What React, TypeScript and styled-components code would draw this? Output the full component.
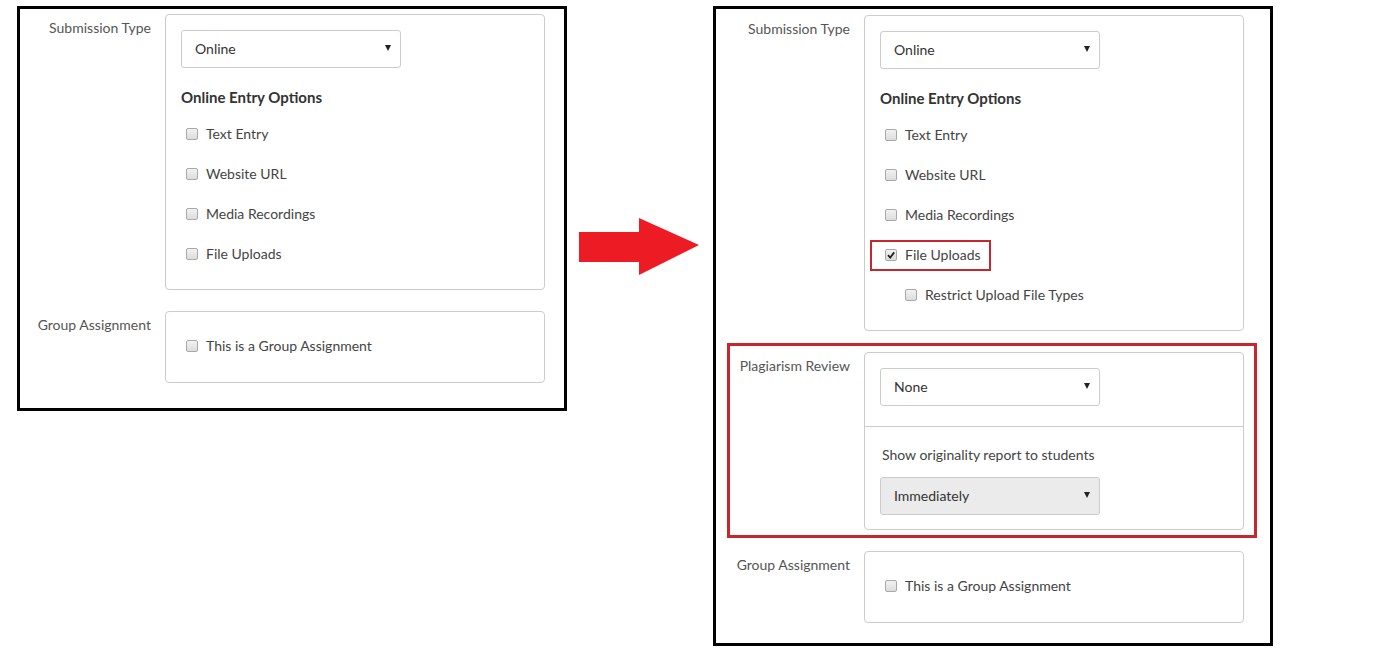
import React from "react";
import styled, { createGlobalStyle } from "styled-components";

const GlobalStyle = createGlobalStyle`
  html, body {
    margin: 0;
    padding: 0;
    background: #fff;
  }
  body {
    font-family: Lato, "Open Sans", "Liberation Sans", sans-serif;
    color: #333;
  }
`;

const Page = styled.div`
  display: flex;
  align-items: flex-start;
  padding: 6px 0 0 17px;
`;

const Frame = styled.div<{ $width: number; $pad: string; $offset?: number }>`
  box-sizing: border-box;
  width: ${(p) => p.$width}px;
  margin-left: ${(p) => p.$offset ?? 0}px;
  border: 3px solid #000;
  padding: ${(p) => p.$pad};
  display: flex;
  flex-direction: column;
  gap: 21px;
`;

const ArrowWrap = styled.svg`
  flex: none;
  margin: 212px 0 0 12px;
`;

const Row = styled.div`
  display: flex;
  align-items: flex-start;
`;

const Highlight = styled.div`
  border: 3px solid #c8262e;
  margin: -9px -13px -8px -3px;
  padding: 6px 10px 5px 0;
`;

const Label = styled.div`
  flex: none;
  box-sizing: border-box;
  width: 134px;
  padding: 4px 14px 0 0;
  text-align: right;
  font-size: 14px;
  line-height: 20px;
  color: #555;
`;

const Panel = styled.div`
  flex: none;
  box-sizing: border-box;
  width: 380px;
  border: 1px solid #ccc;
  border-radius: 4px;
  background: #fff;
`;

const Section = styled.div<{ $pad?: string }>`
  padding: ${(p) => p.$pad ?? "15px"};

  & + & {
    border-top: 1px solid #ccc;
  }
`;

const Select = styled.div<{ $disabled?: boolean }>`
  box-sizing: border-box;
  width: 220px;
  height: 38px;
  display: flex;
  align-items: center;
  justify-content: space-between;
  padding: 0 9px 2px 13px;
  border: 1px solid #ccc;
  border-radius: 3px;
  background: ${(p) => (p.$disabled ? "#ebebeb" : "#fff")};
  font-size: 14px;
  color: #333;
`;

const Caret = styled.span`
  width: 0;
  height: 0;
  border-left: 3px solid transparent;
  border-right: 3px solid transparent;
  border-top: 6px solid #222;
`;

const Heading = styled.div`
  margin: 19px 0 7px;
  font-size: 15px;
  font-weight: 700;
  line-height: 20px;
  color: #333;
`;

const Caption = styled.div`
  font-size: 14px;
  line-height: 20px;
  color: #444;
  margin: -1px 0 12px 2px;
`;

const CheckRow = styled.div<{ $indent?: number }>`
  height: 40px;
  display: flex;
  align-items: center;
  gap: 8px;
  padding-left: ${(p) => p.$indent ?? 5}px;
  font-size: 14px;
  color: #444;
`;

const Text = styled.span`
  margin-top: -2px;
`;

const Mark = styled.span`
  box-sizing: border-box;
  height: 31px;
  display: inline-flex;
  align-items: center;
  gap: 8px;
  margin-left: -15px;
  padding: 0 8px 0 13px;
  border: 2px solid #c8262e;
`;

const Box = styled.span`
  flex: none;
  box-sizing: border-box;
  width: 12px;
  height: 12px;
  display: inline-flex;
  align-items: center;
  justify-content: center;
  border: 1px solid #a9a9a9;
  border-radius: 2px;
  background: linear-gradient(#f2f2f2, #dcdcdc);
`;

const Checkbox = ({ checked }: { checked?: boolean }) => (
  <Box>
    {checked && (
      <svg width="10" height="10" viewBox="0 0 10 10">
        <path d="M2 5.2 L4.2 7.6 L8.2 2.4" fill="none" stroke="#222" strokeWidth="1.8" />
      </svg>
    )}
  </Box>
);

const Arrow = () => (
  <ArrowWrap width="120" height="57" viewBox="0 0 120 57">
    <polygon points="0,14 60,14 60,0 120,27 60,57 60,44 0,44" fill="#ed1c24" />
  </ArrowWrap>
);

const Option = ({ label, checked, indent }: { label: string; checked?: boolean; indent?: number }) => (
  <CheckRow $indent={indent}>
    <Checkbox checked={checked} />
    <Text>{label}</Text>
  </CheckRow>
);

const SubmissionType = ({ expanded }: { expanded?: boolean }) => (
  <Row>
    <Label>Submission Type</Label>
    <Panel>
      <Section>
        <Select>
          Online
          <Caret />
        </Select>
        <Heading>Online Entry Options</Heading>
        <Option label="Text Entry" />
        <Option label="Website URL" />
        <Option label="Media Recordings" />
        {expanded ? (
          <>
            <CheckRow>
              <Mark>
                <Checkbox checked />
                <Text>File Uploads</Text>
              </Mark>
            </CheckRow>
            <Option label="Restrict Upload File Types" indent={25} />
          </>
        ) : (
          <Option label="File Uploads" />
        )}
      </Section>
    </Panel>
  </Row>
);

const GroupAssignment = () => (
  <Row>
    <Label>Group Assignment</Label>
    <Panel>
      <Section $pad="14px 15px 16px">
        <Option label="This is a Group Assignment" />
      </Section>
    </Panel>
  </Row>
);

const PlagiarismReview = () => (
  <Highlight>
    <Row>
      <Label>Plagiarism Review</Label>
      <Panel>
        <Section $pad="15px 15px 20px">
          <Select>
            None
            <Caret />
          </Select>
        </Section>
        <Section $pad="19px 15px 14px">
          <Caption>Show originality report to students</Caption>
          <Select $disabled>
            Immediately
            <Caret />
          </Select>
        </Section>
      </Panel>
    </Row>
  </Highlight>
);

export default function App() {
  return (
    <>
      <GlobalStyle />
      <Page>
        <Frame $width={550} $pad="5px 19px 25px 11px">
          <SubmissionType />
          <GroupAssignment />
        </Frame>
        <Arrow />
        <Frame $width={560} $pad="6px 26px 20px 14px" $offset={14}>
          <SubmissionType expanded />
          <PlagiarismReview />
          <GroupAssignment />
        </Frame>
      </Page>
    </>
  );
}
